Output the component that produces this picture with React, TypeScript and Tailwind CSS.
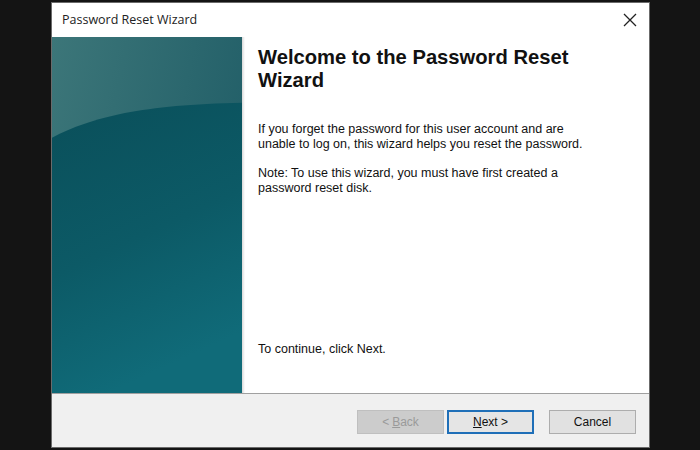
const Panel = () => (
  <svg viewBox="0 0 189 357" preserveAspectRatio="none" className="h-full w-full">
    <defs>
      <linearGradient id="top" x1="0" y1="0" x2="1" y2="0.4">
        <stop offset="0" stopColor="#3c7679" />
        <stop offset="1" stopColor="#225f68" />
      </linearGradient>
      <linearGradient id="low" x1="0" y1="0" x2="0.3" y2="1">
        <stop offset="0" stopColor="#0a4f5a" />
        <stop offset="0.55" stopColor="#0c5a66" />
        <stop offset="1" stopColor="#106b79" />
      </linearGradient>
    </defs>
    <rect width="189" height="357" fill="url(#top)" />
    <path d="M0 101 C 40 80, 90 68, 189 66 L189 357 L0 357 Z" fill="url(#low)" />
  </svg>
);

const Button = ({
  children,
  variant,
}: {
  children: React.ReactNode;
  variant?: "disabled" | "default";
}) => {
  const base =
    "flex h-[24px] w-[87px] items-center justify-center text-[12px]";
  if (variant === "disabled")
    return (
      <div className={`${base} border border-[#bfbfbf] bg-[#cccccc] text-[#9a9a9a]`}>
        {children}
      </div>
    );
  if (variant === "default")
    return (
      <div className={`${base} border-2 border-[#1f6fb8] bg-[#e5e5e5] text-[#111]`}>
        {children}
      </div>
    );
  return (
    <div className={`${base} border border-[#adadad] bg-[#e1e1e1] text-[#111]`}>
      {children}
    </div>
  );
};

export default function App() {
  return (
    <div
      className="flex h-[450px] w-[700px] bg-[#141414] pt-[2px] pl-[51px]"
      style={{ fontFamily: '"Liberation Sans", Arial, sans-serif' }}
    >
      <div className="flex h-[446px] w-[599px] flex-col border border-[#6b6b6b] bg-white">
        <div className="flex h-[34px] shrink-0 items-center justify-between pl-[10px] pr-[12px]">
          <span
            className="text-[12.5px] text-[#222]"
            style={{ fontFamily: '"Open Sans", "Noto Sans", sans-serif' }}
          >
            Password Reset Wizard
          </span>
          <svg width="14" height="14" viewBox="0 0 14 14">
            <path d="M1 1 L13 13 M13 1 L1 13" stroke="#222" strokeWidth="1.3" />
          </svg>
        </div>
        <div className="flex h-[357px] shrink-0 border-b border-[#a0a0a0]">
          <div className="h-full w-[190px] shrink-0">
            <Panel />
          </div>
          <div className="h-full w-[3px] bg-gradient-to-r from-[#d9d9d9] to-white" />
          <div className="flex flex-1 flex-col pl-[13px] pr-[10px] pt-[9px] text-[#111]">
            <h1 className="text-[20.2px] font-bold leading-[23px]">
              Welcome to the Password Reset
              <br />
              Wizard
            </h1>
            <p className="mt-[30px] text-[12.5px] leading-[15px]">
              If you forget the password for this user account and are
              <br />
              unable to log on, this wizard helps you reset the password.
            </p>
            <p className="mt-[14px] text-[12.5px] leading-[15px]">
              Note: To use this wizard, you must have first created a
              <br />
              password reset disk.
            </p>
            <p className="mt-auto mb-[36px] text-[12.5px] leading-[15px]">
              To continue, click Next.
            </p>
          </div>
        </div>
        <div className="flex flex-1 items-start justify-end bg-[#f0f0f0] pr-[13px] pt-[16px]">
          <Button variant="disabled">
            &lt; <span className="ml-[3px] underline">B</span>ack
          </Button>
          <div className="ml-[3px]">
            <Button variant="default">
              <span className="underline">N</span>ext &gt;
            </Button>
          </div>
          <div className="ml-[15px]">
            <Button>Cancel</Button>
          </div>
        </div>
      </div>
    </div>
  );
}
